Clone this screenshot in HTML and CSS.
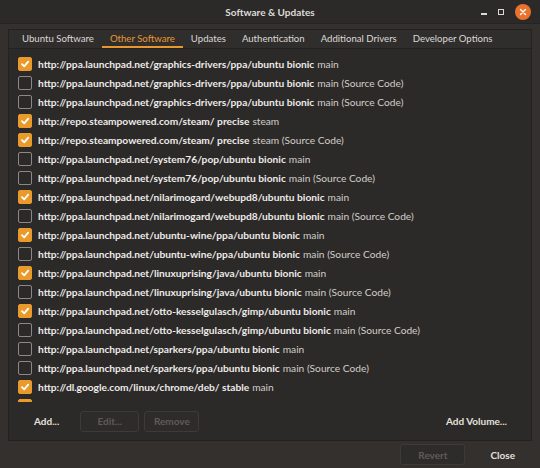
FILE: index.html
```html
<!DOCTYPE html>
<html lang="en">
<head>
  <meta charset="UTF-8">
  <title>Software &amp; Updates</title>
  <link rel="stylesheet" href="styles.css">
</head>
<body>
  <div class="window">
    <div class="titlebar">
      <div></div>
      <div class="title">Software &amp; Updates</div>
      <div class="wm-buttons">
        <span class="wm-min"></span>
        <span class="wm-max"></span>
        <span class="wm-close">
          <svg width="8" height="8" viewBox="0 0 8 8"><path d="M1.5 1.5 L6.5 6.5 M6.5 1.5 L1.5 6.5" stroke="#fff" stroke-width="1.4" stroke-linecap="round"/></svg>
        </span>
      </div>
    </div>

    <div class="notebook">
      <div class="tabs">
        <div class="tab">Ubuntu Software</div>
        <div class="tab active">Other Software</div>
        <div class="tab">Updates</div>
        <div class="tab">Authentication</div>
        <div class="tab">Additional Drivers</div>
        <div class="tab">Developer Options</div>
      </div>

      <div class="page">
        <div class="source-list" id="sourceList"></div>

        <div class="actions">
          <button class="flat">Add...</button>
          <button class="boxed edit" disabled>Edit...</button>
          <button class="boxed" disabled>Remove</button>
          <div class="spacer"></div>
          <button class="flat">Add Volume...</button>
        </div>
      </div>
    </div>

    <div class="footer">
      <button class="boxed revert" disabled>Revert</button>
      <button class="flat close">Close</button>
    </div>
  </div>

  <script>
    // apt sources: [checked, uri, dist, component, source code]
    const sources = [
      [true,  'http://ppa.launchpad.net/graphics-drivers/ppa/ubuntu', 'bionic', 'main', false],
      [false, 'http://ppa.launchpad.net/graphics-drivers/ppa/ubuntu', 'bionic', 'main', true],
      [false, 'http://ppa.launchpad.net/graphics-drivers/ppa/ubuntu', 'bionic', 'main', true],
      [true,  'http://repo.steampowered.com/steam/', 'precise', 'steam', false],
      [true,  'http://repo.steampowered.com/steam/', 'precise', 'steam', true],
      [false, 'http://ppa.launchpad.net/system76/pop/ubuntu', 'bionic', 'main', false],
      [false, 'http://ppa.launchpad.net/system76/pop/ubuntu', 'bionic', 'main', true],
      [true,  'http://ppa.launchpad.net/nilarimogard/webupd8/ubuntu', 'bionic', 'main', false],
      [false, 'http://ppa.launchpad.net/nilarimogard/webupd8/ubuntu', 'bionic', 'main', true],
      [true,  'http://ppa.launchpad.net/ubuntu-wine/ppa/ubuntu', 'bionic', 'main', false],
      [false, 'http://ppa.launchpad.net/ubuntu-wine/ppa/ubuntu', 'bionic', 'main', true],
      [true,  'http://ppa.launchpad.net/linuxuprising/java/ubuntu', 'bionic', 'main', false],
      [false, 'http://ppa.launchpad.net/linuxuprising/java/ubuntu', 'bionic', 'main', true],
      [true,  'http://ppa.launchpad.net/otto-kesselgulasch/gimp/ubuntu', 'bionic', 'main', false],
      [false, 'http://ppa.launchpad.net/otto-kesselgulasch/gimp/ubuntu', 'bionic', 'main', true],
      [false, 'http://ppa.launchpad.net/sparkers/ppa/ubuntu', 'bionic', 'main', false],
      [false, 'http://ppa.launchpad.net/sparkers/ppa/ubuntu', 'bionic', 'main', true],
      [true,  'http://dl.google.com/linux/chrome/deb/', 'stable', 'main', false],
      [true,  'http://dl.google.com/linux/chrome/deb/', 'stable', 'main', true]
    ];

    const checkSvg = '<svg width="10" height="10" viewBox="0 0 10 10"><path d="M2 5.2 L4.2 7.3 L8.2 2.6" fill="none" stroke="#fff" stroke-width="1.8" stroke-linecap="round" stroke-linejoin="round"/></svg>';

    const list = document.getElementById('sourceList');
    sources.forEach(([checked, uri, dist, comp, src]) => {
      const row = document.createElement('div');
      row.className = 'source-row';
      row.innerHTML =
        '<span class="check' + (checked ? ' on' : '') + '">' + (checked ? checkSvg : '') + '</span>' +
        '<span class="uri">' + uri + ' ' + dist + '</span>' +
        '<span class="comp">' + comp + (src ? ' (Source Code)' : '') + '</span>';
      list.appendChild(row);
    });
  </script>
</body>
</html>
```

FILE: styles.css
```css
body {
  margin: 0;
  background-color: #33302e;
  font-family: Lato, "Noto Sans", sans-serif;
  font-size: 10.2px;
  color: #e6e3e0;
}

.window {
  width: 540px;
  height: 468px;
  display: flex;
  flex-direction: column;
  overflow: hidden;
}

.titlebar {
  height: 24px;
  background-color: #2c2a29;
  border-bottom: 1px solid #262423;
  display: grid;
  grid-template-columns: 1fr auto 1fr;
  align-items: center;
  box-sizing: border-box;
}

.title {
  font-weight: bold;
  font-size: 10px;
  color: #dedbd8;
}

.wm-buttons {
  display: flex;
  justify-content: flex-end;
  align-items: center;
  gap: 11px;
  padding-right: 9px;
}

.wm-min {
  width: 6px;
  height: 2px;
  margin-top: 5px;
  background-color: #dcd9d6;
}

.wm-max {
  width: 4px;
  height: 4px;
  border: 1.5px solid #dcd9d6;
}

.wm-close {
  width: 16px;
  height: 16px;
  border-radius: 50%;
  background-color: #e9732e;
  display: flex;
  align-items: center;
  justify-content: center;
}

.notebook {
  margin: 5px 8px 0;
  height: 410px;
  border: 1px solid #242221;
  display: flex;
  flex-direction: column;
  background-color: #302e2c;
}

.tabs {
  height: 18px;
  display: flex;
  padding-left: 5px;
  border-bottom: 1px solid #242221;
  white-space: nowrap;
}

.tab {
  padding: 0 8px;
  line-height: 18px;
  font-size: 9.6px;
  color: #dcd8d5;
  box-sizing: border-box;
}

.tab.active {
  color: #e8962e;
  border-bottom: 2px solid #e8962e;
}

.page {
  flex: 1;
  display: flex;
  flex-direction: column;
  background-color: #2c2a28;
}

.source-list {
  height: 353px;
  overflow: hidden;
  padding: 5px 0 0 9px;
  box-sizing: border-box;
}

.source-row {
  height: 19px;
  display: flex;
  align-items: center;
  white-space: nowrap;
}

.check {
  width: 12px;
  height: 12px;
  border: 1px solid #8d8885;
  border-radius: 2px;
  margin-right: 6px;
  display: flex;
  align-items: center;
  justify-content: center;
  flex-shrink: 0;
}

.check.on {
  background-color: #e99a2b;
  border-color: #e99a2b;
}

.uri {
  font-weight: bold;
  color: #eeebe8;
  margin-right: 3px;
}

.comp {
  color: #d2cdc9;
}

.actions {
  flex: 1;
  display: flex;
  align-items: center;
  padding: 0 15px 0 16px;
  gap: 5px;
}

.spacer {
  flex: 1;
}

button {
  font-family: inherit;
  font-size: 10px;
  font-weight: bold;
  height: 21px;
  padding: 0 8px;
  background: transparent;
  color: #e3e0dd;
  border: 1px solid transparent;
  border-radius: 3px;
}

button.boxed {
  min-width: 55px;
  border-color: #3d3a38;
  background-color: #2e2c2a;
}

button:disabled {
  color: #5f5b58;
}

.actions .edit {
  min-width: 59px;
  margin-left: 7px;
}

.footer {
  flex: 1;
  display: flex;
  justify-content: flex-end;
  align-items: center;
  gap: 18px;
  padding-right: 18px;
}

.revert {
  width: 65px;
}

.close {
  padding: 0 6px;
}
```
